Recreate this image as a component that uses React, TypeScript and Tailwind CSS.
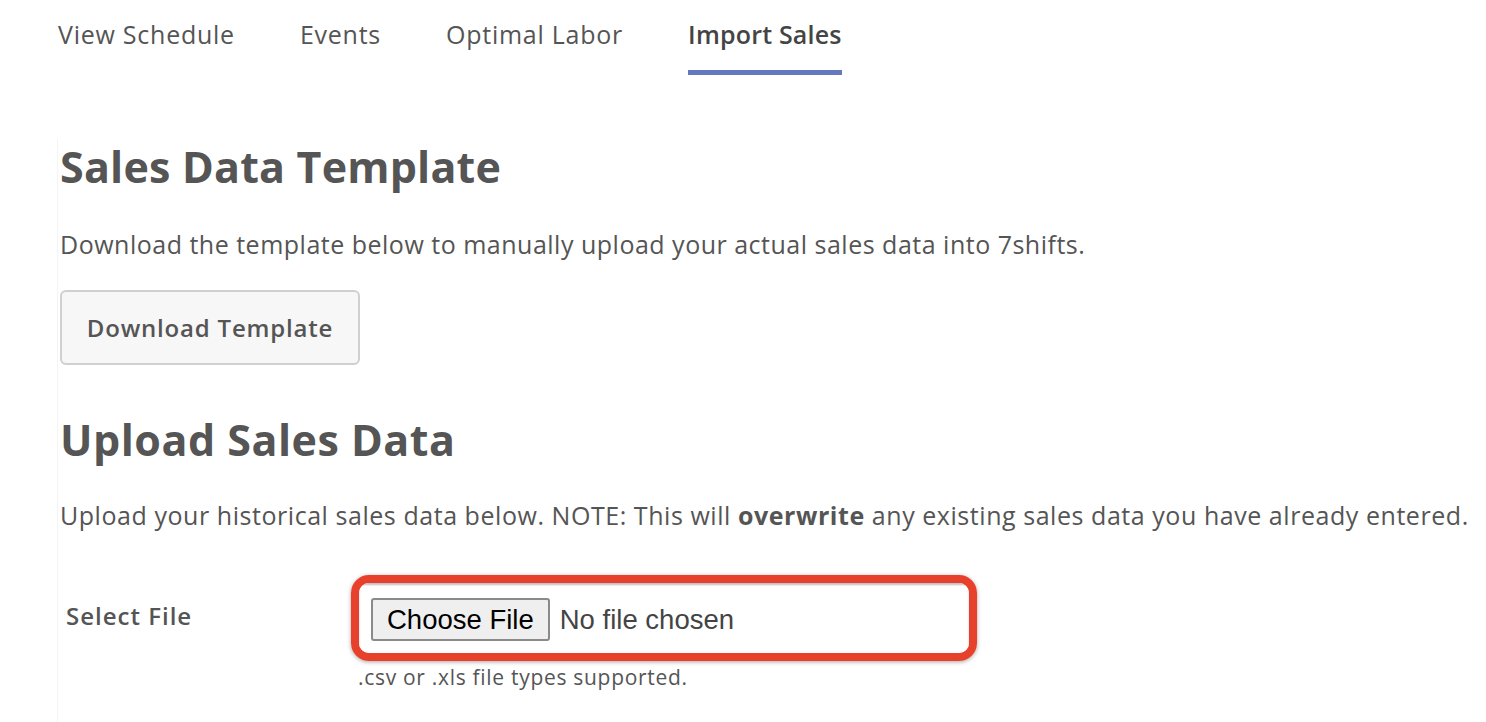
import React from "react";

const tabs = [
  { label: "View Schedule", active: false },
  { label: "Events", active: false },
  { label: "Optimal Labor", active: false },
  { label: "Import Sales", active: true },
];

export default function App() {
  return (
    <div className="w-[1486px] h-[722px] overflow-hidden bg-white text-[#555555] font-['Open_Sans','Lato',sans-serif]">
      <nav className="flex gap-[65px] pl-[58px] h-[76px]">
        {tabs.map((t) => (
          <div key={t.label} className="flex flex-col justify-between">
            <span
              className={
                "pt-[17px] text-[25px] leading-[34px] " +
                (t.active ? "font-semibold text-[#444444] tracking-[0.2px]" : "text-[#555555] tracking-[0.75px]")
              }
            >
              {t.label}
            </span>
            <div className={"h-[5px] mb-[1px] " + (t.active ? "bg-[#6579c0]" : "bg-transparent")} />
          </div>
        ))}
      </nav>
      <div className="ml-[57px] mt-[64px] border-l border-[#f4f4f4] pl-[2px] h-[600px]">
        <h1 className="text-[43px] leading-[56px] font-bold tracking-[0.2px] text-[#555555] -mt-[1px]">Sales Data Template</h1>
        <p className="mt-[32px] text-[25px] leading-[34px] tracking-[0.5px]">
          Download the template below to manually upload your actual sales data into 7shifts.
        </p>
        <button className="mt-[29px] w-[300px] h-[75px] rounded-[6px] border-2 border-[#d0d0d0] bg-[#f7f7f7] text-[24px] tracking-[0.8px] font-semibold text-[#555555]">
          Download Template
        </button>
        <h2 className="mt-[47px] text-[43px] leading-[56px] font-bold tracking-[0.5px]">Upload Sales Data</h2>
        <p className="mt-[30px] text-[25px] leading-[34px] tracking-[0.55px]">
          Upload your historical sales data below. NOTE: This will <b className="font-bold">overwrite</b> any existing sales data you have already entered.
        </p>
        <div className="mt-[43px] flex">
          <div className="w-[291px] pl-[6px] pt-[24px] text-[24px] leading-[34px] tracking-[1px] font-semibold">Select File</div>
          <div className="flex flex-col">
            <div className="w-[626px] h-[86px] rounded-[18px] border-[8px] border-[#e8412b] shadow-[0_1px_4px_rgba(0,0,0,0.35)] overflow-hidden">
              <div className="h-full bg-white shadow-[inset_0_2px_2px_rgba(0,0,0,0.25)] flex items-center pl-[12px] gap-[10px]">
                <span className="h-[43px] mt-[3px] px-[14px] flex items-center rounded-[3px] border-2 border-[#8a8a8a] bg-[#efefef] text-black text-[27.5px] font-['Liberation_Sans',Arial,sans-serif]">
                  Choose File
                </span>
                <span className="mt-[3px] text-[27.5px] text-[#444444] font-['Liberation_Sans',Arial,sans-serif]">No file chosen</span>
              </div>
            </div>
            <div className="pl-[7px] pt-[2px] text-[21px] leading-[28px] tracking-[0.7px] text-[#555555]">
              .csv or .xls file types supported.
            </div>
          </div>
        </div>
      </div>
    </div>
  );
}
